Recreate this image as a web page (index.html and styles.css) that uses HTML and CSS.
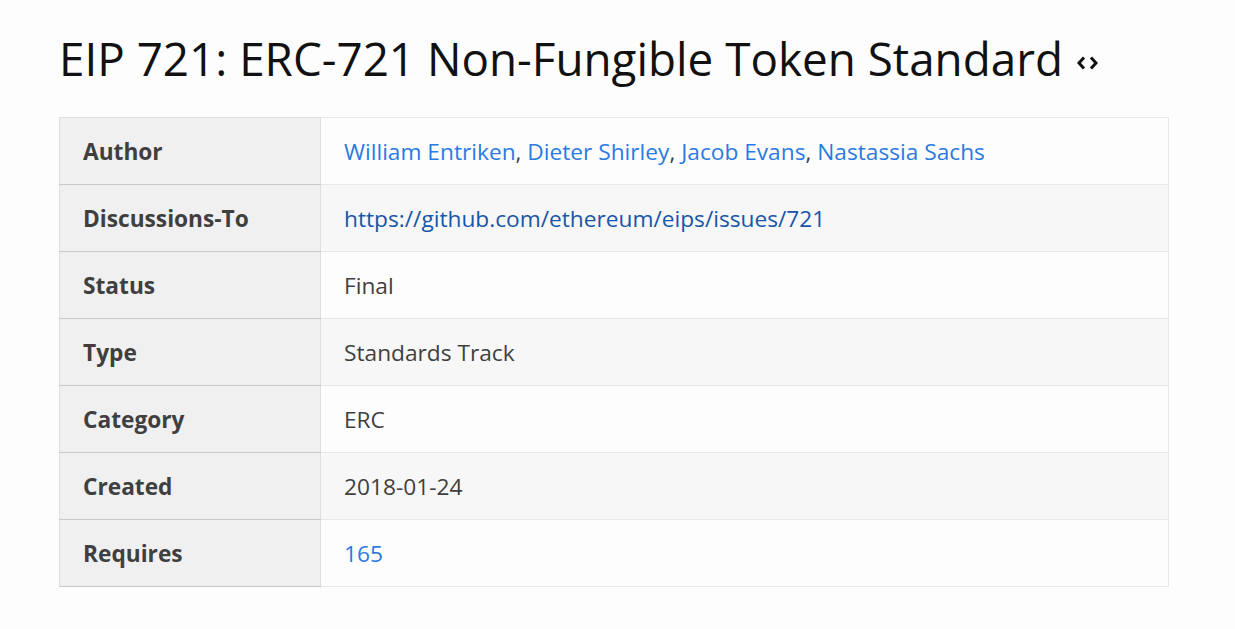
FILE: index.html
```html
<!DOCTYPE html>
<html>
<head>
<meta charset="utf-8">
<link rel="stylesheet" href="styles.css">
</head>
<body>
<main class="wrapper">
  <h1 class="title">EIP 721: ERC-721 Non-Fungible Token Standard <a class="src" href="#"><svg width="21" height="14" viewBox="0 0 21 14"><path d="M7 1.5 L2 7 L7 12.5" fill="none" stroke="#111" stroke-width="3"/><path d="M14 1.5 L19 7 L14 12.5" fill="none" stroke="#111" stroke-width="3"/></svg></a></h1>
  <table class="meta">
    <tr><th>Author</th><td><a href="#">William Entriken</a>, <a href="#">Dieter Shirley</a>, <a href="#">Jacob Evans</a>, <a href="#">Nastassia Sachs</a></td></tr>
    <tr><th>Discussions-To</th><td><a class="visited" href="#">https://github.com/ethereum/eips/issues/721</a></td></tr>
    <tr><th>Status</th><td>Final</td></tr>
    <tr><th>Type</th><td>Standards Track</td></tr>
    <tr><th>Category</th><td>ERC</td></tr>
    <tr><th>Created</th><td>2018-01-24</td></tr>
    <tr><th>Requires</th><td><a href="#">165</a></td></tr>
  </table>
</main>
</body>
</html>
```
FILE: styles.css
```css
html, body {
  margin: 0;
  padding: 0;
  background: #fdfdfd;
}
body {
  font-family: "Open Sans", "Noto Sans", sans-serif;
  color: #111;
}
.wrapper {
  padding: 0 66px 0 59px;
}
.title {
  margin: 0 0 32px 0;
  padding-top: 32px;
  height: 85px;
  box-sizing: border-box;
  font-size: 45.8px;
  line-height: 53px;
  font-weight: 400;
  color: #111;
  white-space: nowrap;
}
.src {
  display: inline-block;
  margin-left: 2px;
  vertical-align: 6px;
  line-height: 0;
}
.meta {
  width: 1110px;
  border-collapse: collapse;
  border: 1px solid #e8e8e8;
  color: #3f3f3f;
  font-size: 22.7px;
  line-height: 33px;
  text-align: left;
}
.meta th, .meta td {
  padding: 16.5px 23px;
  height: 33px;
}
.meta th {
  width: 214px;
  background: #f0f0f0;
  border: 1px solid #dedede;
  border-bottom-color: #c9c9c9;
  font-weight: 700;
}
.meta td {
  border: 1px solid #e8e8e8;
  font-weight: 400;
}
.meta tr:nth-child(even) td {
  background: #f7f7f7;
}
.meta a {
  color: #2a7ae2;
  text-decoration: none;
}
.meta a.visited {
  color: #1756a9;
}
```
